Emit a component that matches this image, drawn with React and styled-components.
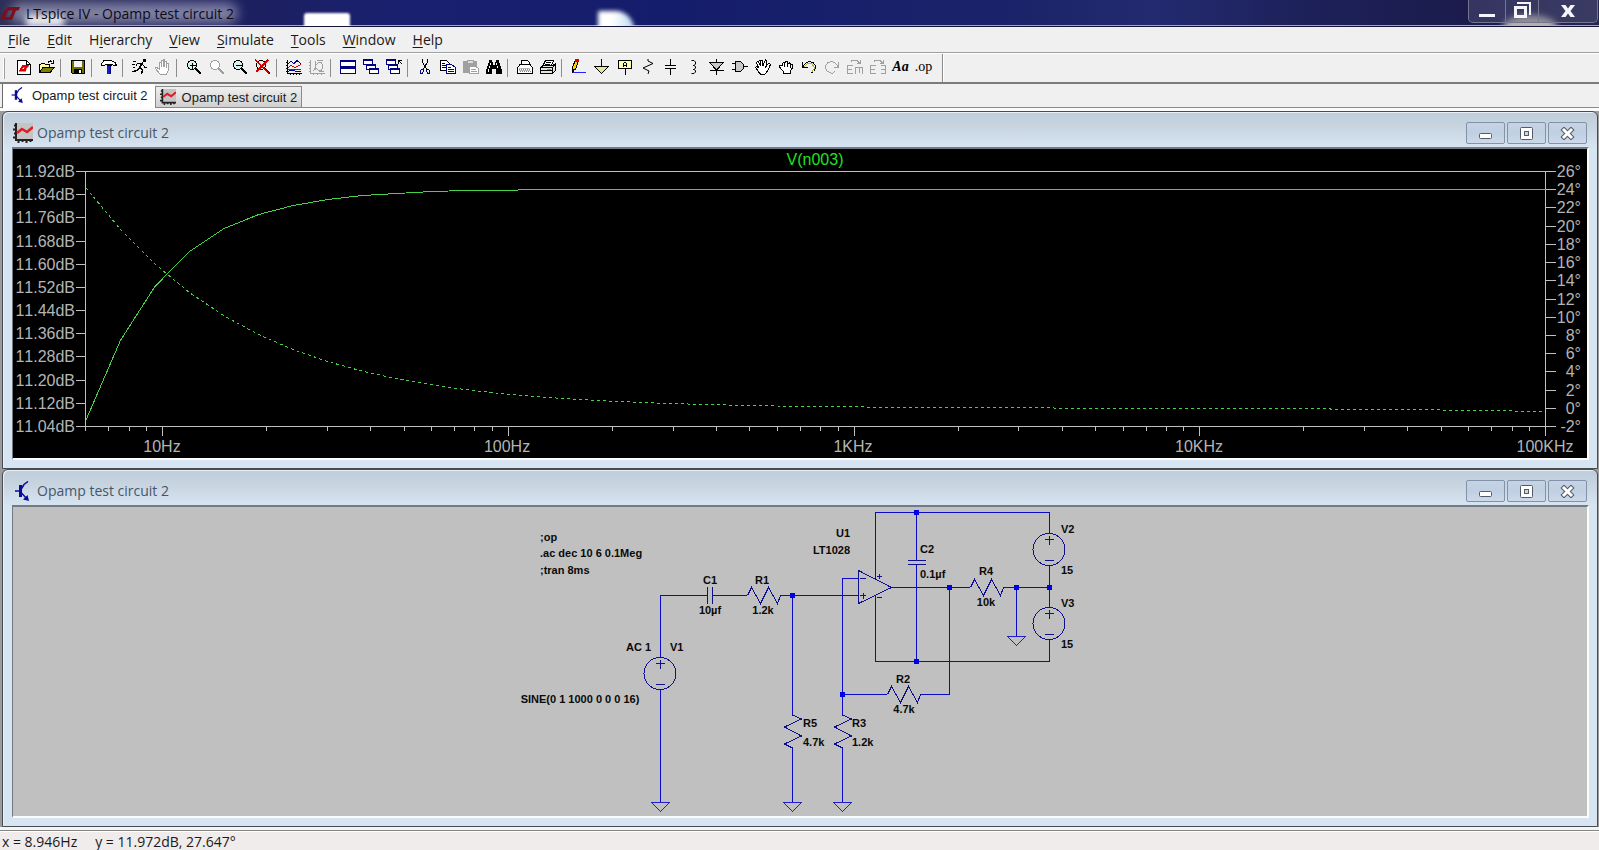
import React from "react";
import styled, { createGlobalStyle, css } from "styled-components";

const Global = createGlobalStyle`
  * { box-sizing: border-box; }
  body { margin: 0; background: #f0f0f0; font-family: "Open Sans", "Noto Sans", sans-serif; font-size: 14px; color: #1a1a1a; }
  button { font: inherit; color: inherit; margin: 0; padding: 0; border: 0; background: none; }
`;

const Page = styled.div`
  display: flex;
  flex-direction: column;
  min-height: 100vh;
`;

/* ---------- title bar ---------- */

const TitleBar = styled.header`
  position: relative;
  display: flex;
  align-items: flex-start;
  height: 27px;
  overflow: hidden;
  background: linear-gradient(90deg, #2d2e56 0, #1c1f60 16%, #1a2070 25%, #141d6b 42%, #1b2369 64%, #232a70 72%, #1d2159 82%, #1b1b4c 92%, #26264f 100%);
  border-bottom: 1px solid #15153c;
  box-shadow: inset 0 -1px 0 #a3a5bd;
`;

const Glow = styled.span`
  position: absolute;
  ${(p) => (p.$right !== undefined ? `right: ${p.$right}px;` : `left: ${p.$x}px;`)}
  top: ${(p) => p.$y}px;
  width: ${(p) => p.$w}px;
  height: ${(p) => p.$h}px;
  background: ${(p) => p.$color};
  border-radius: ${(p) => p.$radius || "3px"};
  filter: blur(${(p) => p.$blur}px);
`;

const AppTitle = styled.h1`
  position: relative;
  flex: 1;
  display: flex;
  align-items: center;
  gap: 6px;
  height: 27px;
  margin: 0;
  font-size: 14px;
  font-weight: 400;
  color: #0b0b18;
`;

const AppControls = styled.div`
  position: relative;
  display: flex;
  height: 23px;
  margin-right: 1px;
  border: 1px solid #74768f;
  border-top: 0;
  border-radius: 0 0 5px 5px;
  background: rgba(90, 92, 130, 0.4);
`;

const AppControl = styled.button`
  display: flex;
  align-items: center;
  justify-content: center;
  width: ${(p) => p.$w}px;
  & + & { border-left: 1px solid #74768f; }
`;

/* ---------- menu ---------- */

const MenuBar = styled.nav`
  display: flex;
  align-items: center;
  height: 26px;
  background: #f0f0f0;
  border-bottom: 1px solid #a0a0a0;
`;

const MenuItem = styled.button`
  padding: 0 8px;
  line-height: 20px;
  margin-right: 1px;
  u { text-underline-offset: 2px; }
`;

/* ---------- toolbar ---------- */

const ToolBar = styled.div`
  display: flex;
  align-items: center;
  height: 31px;
  padding-left: 3px;
  border-top: 1px solid #fff;
  border-bottom: 2px solid #7b7b7b;
`;

const Grip = styled.span`
  width: 2px;
  height: 21px;
  margin-right: 7px;
  background: #fff;
  border-right: 1px solid #a0a0a0;
`;

const ToolButton = styled.button`
  display: flex;
  align-items: center;
  justify-content: center;
  width: 23px;
  height: 22px;
  padding-bottom: 2px;
  svg { display: block; }
`;

const Divider = styled.span`
  width: 1px;
  height: 18px;
  margin: 0 5px 0 2px;
  background: #8c8c8c;
`;

const ToolEnd = styled.span`
  width: 2px;
  align-self: stretch;
  margin-left: 7px;
  background: #fff;
  border-left: 1px solid #8c8c8c;
`;

/* ---------- document tabs ---------- */

const TabStrip = styled.div`
  display: flex;
  align-items: flex-end;
  height: 27px;
  padding: 0 2px 3px;
  background: linear-gradient(#f0f0f0 23px, #8a8a8a 23px, #8a8a8a 24px, #fbfbfb 24px);
`;

const Tab = styled.button`
  display: flex;
  align-items: center;
  gap: 6px;
  font-family: "Liberation Sans", Arial, sans-serif;
  font-size: 13px;
  ${(p) =>
    p.$active
      ? css`
          height: 24px;
          padding: 0 7px 2px;
          border-left: 1px solid #6a6a6a;
          background: #fff;
        `
      : css`
          height: 22px;
          padding: 0 4px;
          border: 1px solid #8a8a8a;
          background: linear-gradient(#f0f0f0, #cfcfcf);
        `}
`;

/* ---------- MDI windows ---------- */

const Workspace = styled.main`
  flex: 1;
  display: flex;
  flex-direction: column;
  padding: 0 1px 0 2px;
  background: #9c9c9c;
`;

const Frame = styled.section`
  flex: ${(p) => (p.$grow ? "1 0 auto" : "0 0 auto")};
  display: flex;
  flex-direction: column;
  padding: 0 8px 8px 9px;
  border: 1px solid #474c52;
  border-radius: 6px 6px 0 0;
  background: linear-gradient(#bfcddb 0, #c6d3df 12px, #d7e4f1 36px, #d7e4f2 100%);
  box-shadow: inset 1px 1px 0 #e8eff6;
`;

const FrameBar = styled.div`
  display: flex;
  align-items: center;
  height: 35px;
`;

const FrameTitle = styled.h2`
  flex: 1;
  display: flex;
  align-items: center;
  gap: 4px;
  margin: 0;
  padding: 7px 0 0 1px;
  line-height: 20px;
  font-size: 14px;
  font-weight: 400;
  color: #465668;
`;

const FrameControls = styled.div`
  display: flex;
  gap: 2px;
  padding: 7px 2px 0 0;
`;

const FrameControl = styled.button`
  display: flex;
  align-items: center;
  justify-content: center;
  width: 39px;
  height: 22px;
  border: 1px solid #8193ab;
  border-radius: 2px;
  background: linear-gradient(#c6d3e4, #c0cfe2 50%, #cbd9ea);
`;

const Client = styled.div`
  flex: 1;
  border: 2px solid #fcfcfc;
  border-top-color: #727b84;
  border-left: 1px solid #727b84;
  background: ${(p) => p.$bg};
`;

const Drawing = styled.svg`
  display: block;
  width: 100%;
  height: auto;
`;

const AxisText = styled.text`
  font-family: "Liberation Sans", Arial, sans-serif;
  font-size: 16px;
  font-kerning: none;
  fill: ${(p) => p.$color || "#b4b4b4"};
`;

const PartText = styled.text`
  font-family: "Liberation Sans", Arial, sans-serif;
  font-size: 11px;
  font-weight: 700;
  fill: #0a0a0a;
`;

const StatusBar = styled.footer`
  display: flex;
  align-items: center;
  gap: 18px;
  height: 23px;
  padding: 6px 2px 0;
  overflow: hidden;
  background: linear-gradient(#f4f4f4 3px, #858585 3px, #858585 4px, #fff 4px, #fff 5px, #f0eceb 5px);
  line-height: 17px;
  white-space: pre;
`;

/* ---------- icons ---------- */

const Icon = ({ children, w = 16, h = 16 }) => (
  <svg width={w} height={h} viewBox={`0 0 ${w} ${h}`} fill="none" stroke="#000" strokeWidth="1" shapeRendering="crispEdges" aria-hidden="true">
    {children}
  </svg>
);

const GRAY = "#a0a0a0";
const NAVY = "#000080";

const LtLogo = () => (
  <svg width="20" height="14" viewBox="0 0 20 14" aria-hidden="true">
    <path fill="#7c0f1c" d="M0 13 L4.500 3 H8.500 L5 10 H9.500 L8.500 13Z M7 0 H20 L18.500 3.500 H16 L12 13 H8.500 L12.500 3.500 H6Z" />
  </svg>
);

const ChartIcon = ({ size = 16 }) => (
  <svg width={size} height={size} viewBox="0 0 20 20" fill="none" aria-hidden="true">
    <rect x="3" y="0" width="17" height="17" fill="#c4c4c4" />
    <path d="M3 0V17H20M1 2.500H3M0 6.500H3M1 10.500H3M0 14.500H3M5.500 17v3M9.500 17v2M13.500 17v3M17.500 17v2" stroke="#222" strokeWidth="2" />
    <path d="M4 10 L9 6 L14 9 L20 4" stroke="#e01b24" strokeWidth="2.500" />
  </svg>
);

const TransistorIcon = ({ size = 16 }) => (
  <svg width={size} height={size} viewBox="0 0 20 20" fill="none" stroke="#0a0a9a" aria-hidden="true">
    <path d="M2 10H7" strokeWidth="1.500" />
    <path d="M7.500 4V16" strokeWidth="3" />
    <path d="M8 8.500L11 3.500L15 0.500M8 11.500L14 18" strokeWidth="1.500" />
    <path d="M16 20L10 18.500L14.500 14Z" fill="#0a0a9a" stroke="none" />
  </svg>
);

const Lens = ({ color = "#000", fill = "#d8f2f0", children }) => (
  <Icon>
    <circle cx="6" cy="6" r="4.500" stroke={color} fill={fill} />
    <path d="M9.500 9.500L15 15" stroke={color} strokeWidth="2" />
    {children}
  </Icon>
);

const ToolIcons = {
  newSchematic: (
    <Icon>
      <path d="M1.500 1.500h9l4 4v10h-13z" fill="#fff" />
      <path d="M10.500 1.500v4h4" />
      <path d="M3 12L5 7.500H7L6 10H8L7.500 12ZM6.500 6H13L12 8H11L9.500 12H7.500L9 8H6Z" fill="#e00000" stroke="#e00000" strokeWidth=".5" />
    </Icon>
  ),
  open: (
    <Icon>
      <path d="M.5 13.500V5.500h1l1-1h3l1 1h4v3" fill="#ffff9c" />
      <path d="M.5 13.500L4 8.500H15.500L11 13.500Z" fill="#808000" />
      <path d="M9 3.500c1-2 3-2 4-.5M14.500 1v3h-3" />
    </Icon>
  ),
  save: (
    <Icon>
      <path d="M1.500 1.500h13v13h-12l-1-1z" fill="#6f7000" />
      <path d="M4 2h8v6H4z" fill="#f4f4f4" stroke="none" />
      <path d="M4 10h8v4H4z" fill="#000" stroke="none" />
      <path d="M9 11h2v3H9z" fill="#fff" stroke="none" />
    </Icon>
  ),
  hammer: (
    <Icon>
      <path d="M.5 4.500L3 1.500H10L14 3.500L15.500 6.500H13L11 5.500H5L3 6.500H1Z" fill="#fff" />
      <path d="M5.500 6.500h5" />
      <path d="M8 7v8" stroke="#0a1fc8" strokeWidth="4" />
      <path d="M9.500 7v8" stroke={NAVY} />
    </Icon>
  ),
  run: (
    <Icon>
      <path d="M11 0h3v3h-3z" fill="#000" stroke="none" />
      <path d="M10.500 3.500L7.500 8.500L10.500 11L9.500 15M7.500 8.500L5.500 11.500L.5 12.500" strokeWidth="1.500" />
      <path d="M10.500 5l2 3h2.500M9.500 4L5.500 4.500L4 7M1 2h3M0 5h3M1 8h2" />
    </Icon>
  ),
  halt: (
    <Icon>
      <path d="M4.500 14.500L.5 9.500V8.500H2L4.500 10.500V3.500H6V8V1.500H8V8V.5H9.500V8V2.500H11.500V8.500V4.500H13.500V11L11.500 15.500H5.500Z" stroke={GRAY} fill="#fff" />
    </Icon>
  ),
  zoomIn: (
    <Lens>
      <path d="M3.500 6.500h6M6.500 3.500v6" />
    </Lens>
  ),
  zoomArea: <Lens color={GRAY} fill="#fff" />,
  zoomOut: (
    <Lens>
      <path d="M3.500 6.500h6" />
    </Lens>
  ),
  zoomFit: (
    <Lens>
      <path d="M0 1L14 14M13 1L1 13" stroke="#d40000" strokeWidth="1.500" />
    </Lens>
  ),
  autorange: (
    <Icon>
      <path d="M1.500 1v13.500H16M0 3.500h1M0 6.500h1M0 9.500h1M0 12.500h1M4.500 15v1M7.500 15v1M10.500 15v1M13.500 15v1" />
      <path d="M2 4.500L5 2.500L8 4.500L11 1.500L15 4.500" stroke={NAVY} />
      <path d="M2 8.500L5 6.500L9 8.500L15 5.500" stroke="#d40000" />
      <path d="M2 10.500h13" stroke="#d40000" />
      <path d="M2 12.500L6 11L10 12.500H15" stroke={NAVY} />
    </Icon>
  ),
  plotPane: (
    <Icon>
      <g stroke={GRAY}>
        <path d="M1.500 1v13.500H16M0 3.500h1M0 6.500h1M0 9.500h1M0 12.500h1M4.500 15v1M8.500 15v1M12.500 15v1" />
        <path d="M6.500 2v9M8 1.500h6M6.500 6.500L9.500 3.500H12.500L13.500 6V9L12.500 11.500H9.500L6.500 9M15 12h-5M4 12L6.500 9" />
      </g>
    </Icon>
  ),
  tile: (
    <Icon>
      <path d="M.5 1.500h15v6h-15zM.5 8.500h15v6h-15z" stroke={NAVY} fill="#fff" />
      <path d="M0 2h16M0 9h16" stroke={NAVY} strokeWidth="2" />
    </Icon>
  ),
  cascade: (
    <Icon>
      <g stroke={NAVY} fill="#fff">
        <path d="M.5 .5h9v5h-9z" />
        <path d="M0 1h10" strokeWidth="2" />
        <path d="M3.500 5.500h9v5h-9z" />
        <path d="M3 6h10" strokeWidth="2" />
        <path d="M6.500 9.500h9v5h-9z" />
        <path d="M6 10h10" strokeWidth="2" />
      </g>
    </Icon>
  ),
  closeAll: (
    <Icon>
      <g stroke={NAVY} fill="#fff">
        <path d="M.5 .5h9v5h-9z" />
        <path d="M0 1h10" strokeWidth="2" />
        <path d="M2.500 5.500h9v5h-9z" />
        <path d="M2 6h10" strokeWidth="2" />
        <path d="M4.500 9.500h9v5h-9z" />
        <path d="M4 10h10" strokeWidth="2" />
      </g>
      <path d="M12.500 5V1.500H16M12.500 1.500L16 5" />
    </Icon>
  ),
  cut: (
    <Icon>
      <path d="M5.500 0v3l4 7M10.500 0v3l-4 7" />
      <path d="M6.500 10h-2l-1 2v2h2l1-2zM9.500 10h2l1 2v2h-2l-1-2z" stroke={NAVY} />
    </Icon>
  ),
  copy: (
    <Icon>
      <path d="M.5 1.500h6l3 3v7h-9z" fill="#fff" />
      <path d="M2 4.500h3M2 6.500h4M2 8.500h4" />
      <path d="M6.500 5.500h5l4 3v6h-9z" fill="#fff" stroke={NAVY} />
      <path d="M8 8.500h3M8 10.500h6M8 12.500h6" stroke={NAVY} />
    </Icon>
  ),
  paste: (
    <Icon>
      <path d="M.5 2.500h13v11H.5z" fill={GRAY} stroke={GRAY} />
      <path d="M4 1h6v3H4z" fill="#ddd" stroke={GRAY} />
      <path d="M6.500 7.500h6l3 2v5h-9z" fill="#fff" stroke={GRAY} />
      <path d="M8 10.500h5M8 12.500h6" stroke={GRAY} />
    </Icon>
  ),
  find: (
    <Icon>
      <path d="M3 1h3v2h1v3h2V3h1V1h3v2l3 8v4h-6v-5H6v5H0v-4l3-8z" fill="#000" stroke="none" />
      <path d="M4.500 4v2M3.500 7v2M2.500 10v3M10.500 4v2M11.500 7v2" stroke="#fff" />
    </Icon>
  ),
  printSetup: (
    <Icon>
      <path d="M4.500 6V1.500h6l2 2V6" fill="#fff" />
      <path d="M.5 8.500L3 5.500H13L15.500 8.500V14.500H.5Z" fill="#fff" />
      <path d="M2 10.500h11M3 12.500h11" stroke="#888" strokeDasharray="1 1" />
      <path d="M2 9.500h11M2 11.500h11" stroke="#bbb" />
    </Icon>
  ),
  print: (
    <Icon>
      <path d="M3 6.500L5.500 1.500H13.500L11.500 6.500" fill="#fff" />
      <path d="M6 3.500h5M5 5.500h5" />
      <path d="M.5 8.500L3 6.500H13L15.500 4.500V11.500L12.500 14.500H.5Z" fill="#e4e4dc" />
      <path d="M.5 8.500h12v6M12.500 8.500L15.500 5M1 11.500h11" />
      <path d="M7 10.500h4" stroke="#a0a000" />
    </Icon>
  ),
  wire: (
    <Icon>
      <path d="M4.500 .5L7.500 2L4.500 10L1.500 12.500V8.500Z" fill="#ffd000" />
      <path d="M4 0h4v3H4z" fill="#d40000" stroke="none" />
      <path d="M1 10h2v4H1z" fill="#000" stroke="none" />
      <path d="M2 13.500h13" stroke="#2222ff" />
    </Icon>
  ),
  ground: (
    <Icon>
      <path d="M7.500 0v7" />
      <path d="M.5 7.500h14L7.500 14.500Z" fill="#e6e69a" />
    </Icon>
  ),
  label: (
    <Icon>
      <path d="M1.500 1.500h13v8h-13z" fill="#ffffb4" />
      <path d="M8 10v6" />
      <path d="M6.500 8V4.500L7.500 3.500h1L9.500 4.500V8M6.500 6.500h3" />
    </Icon>
  ),
  resistor: (
    <Icon>
      <path d="M8 0v2L13 4.500L3 9L9 12L8 15" shapeRendering="auto" />
    </Icon>
  ),
  capacitor: (
    <Icon>
      <path d="M7.500 0v6M2 6.500h11M2 9.500h11M7.500 10v6" />
    </Icon>
  ),
  inductor: (
    <Icon>
      <path d="M5.500 1.500H8L9.500 3V5L8 6.500H7M8 6.500L9.500 7.500V9L8 10.500H7M8 10.500L9.500 11.500V13L8 14.500H5.500" shapeRendering="auto" />
    </Icon>
  ),
  diode: (
    <Icon>
      <path d="M7.500 0v16M1 11.500h14" />
      <path d="M.5 3.500h14L7.500 11Z" fill="#c8c8c8" />
    </Icon>
  ),
  gate: (
    <Icon>
      <path d="M3.500 2.500h5l3 3v4l-3 3h-5z" fill="#c8c8c8" />
      <path d="M0 4.500h3M0 10.500h3M12 7.500h4" />
    </Icon>
  ),
  move: (
    <Icon>
      <path d="M4 13.500L.5 8.500L1.500 7.500L3.500 8.500L1.500 3.500L3 2.500L5.500 7L5 1.500H7L8 6.500L10.500 .5L12 1.500L11 7.500L14 4L15.500 5.500L12.500 12L9.500 15.500H6Z" fill="#fff" />
    </Icon>
  ),
  drag: (
    <Icon>
      <path d="M4.500 11.500L1.500 8L2 6.500H4V4.500L5.500 3.500L6.500 4.500L7.500 2.500H9L10 4.500L11.500 3.500L12.500 5.500H14V9.500L12.500 12V14.500H5.500V12.500Z" fill="#fff" />
      <path d="M6.500 5v3M9.500 5v3M12.500 6v3" />
    </Icon>
  ),
  undo: (
    <Icon>
      <path d="M1.500 3v5h5M2 7.500L4.500 4.500L8 2.500L12 3.500L14.500 7V9.500L12.500 12.500L10 14" />
      <path d="M3 8L5.500 5.500L8 4L11 5L13 8V10L11 12.500" stroke="#b0b040" />
    </Icon>
  ),
  redo: (
    <Icon>
      <path d="M14.500 3v5h-5M14 7.500L11.500 4.500L8 2.500L4 3.500L1.500 7V9.500L3.500 12.500L7 14H9L11 12" stroke={GRAY} />
    </Icon>
  ),
  rotate: (
    <Icon>
      <path d="M3.500 3.500L5 1.500H10L12.500 4M13.500 1v3.500h-4M6 6.500H.5V14.500H6M1 10.500h4M8.500 15V8.500H15.500V15M12 8v6" stroke={GRAY} />
    </Icon>
  ),
  mirror: (
    <Icon>
      <path d="M3.500 3.500L5 1.500H10L12.500 4M13.500 1v3.500h-4M6 6.500H.5V14.500H6M1 10.500h4M10.500 6.500H15.500V14.500H10.500M15 10.500h-4" stroke={GRAY} />
    </Icon>
  ),
};

const GlyphText = styled.span`
  font-family: "Liberation Serif", "Times New Roman", serif;
  font-size: 14px;
  font-weight: ${(p) => (p.$italic ? 700 : 400)};
  font-style: ${(p) => (p.$italic ? "italic" : "normal")};
  line-height: 16px;
  color: #000;
`;

const TOOL_GROUPS = [
  [["New schematic", ToolIcons.newSchematic], ["Open", ToolIcons.open]],
  [["Save", ToolIcons.save]],
  [["Control panel", ToolIcons.hammer]],
  [["Run", ToolIcons.run], ["Halt", ToolIcons.halt]],
  [["Zoom in", ToolIcons.zoomIn], ["Zoom area", ToolIcons.zoomArea], ["Zoom out", ToolIcons.zoomOut], ["Zoom full extents", ToolIcons.zoomFit]],
  [["Autorange", ToolIcons.autorange], ["Plot pane", ToolIcons.plotPane]],
  [["Tile windows", ToolIcons.tile], ["Cascade windows", ToolIcons.cascade], ["Close all windows", ToolIcons.closeAll]],
  [["Cut", ToolIcons.cut], ["Copy", ToolIcons.copy], ["Paste", ToolIcons.paste], ["Find", ToolIcons.find]],
  [["Print setup", ToolIcons.printSetup], ["Print", ToolIcons.print]],
  [
    ["Wire", ToolIcons.wire],
    ["Ground", ToolIcons.ground],
    ["Label net", ToolIcons.label],
    ["Resistor", ToolIcons.resistor],
    ["Capacitor", ToolIcons.capacitor],
    ["Inductor", ToolIcons.inductor],
    ["Diode", ToolIcons.diode],
    ["Component", ToolIcons.gate],
    ["Move", ToolIcons.move],
    ["Drag", ToolIcons.drag],
    ["Undo", ToolIcons.undo],
    ["Redo", ToolIcons.redo],
    ["Rotate", ToolIcons.rotate],
    ["Mirror", ToolIcons.mirror],
    ["Text", <GlyphText $italic>Aa</GlyphText>],
    ["SPICE directive", <GlyphText>.op</GlyphText>],
  ],
];

const MENUS = [
  ["", "F", "ile"],
  ["", "E", "dit"],
  ["H", "i", "erarchy"],
  ["", "V", "iew"],
  ["", "S", "imulate"],
  ["", "T", "ools"],
  ["", "W", "indow"],
  ["", "H", "elp"],
];

/* ---------- Bode plot ---------- */

const PLOT = { left: 72.5, right: 1532.5, top: 22.5, bottom: 277.5 };
const DECADE = 345.75;
const xOf = (f) => PLOT.right + DECADE * Math.log10(f / 1e5);
const yOfDb = (db) => PLOT.bottom - ((db - 11.04) / 0.88) * (PLOT.bottom - PLOT.top);
const yOfDeg = (deg) => PLOT.bottom - ((deg + 2) / 28) * (PLOT.bottom - PLOT.top);

const CORNER = 2.698;
const sweep = [];
for (let k = 0; k <= 42; k++) sweep.push(6 * Math.pow(10, k / 10));
sweep.push(1e5);

const trace = (fn) => sweep.map((f) => `${xOf(f).toFixed(1)},${fn(f).toFixed(1)}`).join(" ");
const magnitude = trace((f) => Math.floor(yOfDb(11.859 - 10 * Math.log10(1 + (CORNER / f) ** 2))) + 0.5);
const phase = trace((f) =>
  yOfDeg(((Math.atan(CORNER / f) - Math.atan(f / 15.3e6)) * 180) / Math.PI)
);

const dbTicks = Array.from({ length: 12 }, (_, i) => 11.92 - i * 0.08);
const degTicks = Array.from({ length: 15 }, (_, i) => 26 - i * 2);
const decades = [[10, "10Hz"], [100, "100Hz"], [1000, "1KHz"], [10000, "10KHz"], [100000, "100KHz"]];
const minorTicks = [6, 7, 8, 9];
[10, 100, 1000, 10000].forEach((d) => {
  for (let m = 2; m < 10; m++) minorTicks.push(m * d);
});
const snap = (v) => Math.floor(v + 0.01) + 0.5;

const BodePlot = () => (
  <Drawing viewBox="0 0 1574 309" role="img" aria-label="V(n003) magnitude and phase">
    <g stroke="#c0c0c0" fill="none" shapeRendering="crispEdges">
      <rect x={PLOT.left} y={PLOT.top} width={PLOT.right - PLOT.left} height={PLOT.bottom - PLOT.top} />
      {dbTicks.map((v) => (
        <path key={v} d={`M63 ${snap(yOfDb(v))}H${PLOT.left}`} />
      ))}
      {degTicks.map((v) => (
        <path key={v} d={`M${PLOT.right} ${snap(yOfDeg(v))}h10`} />
      ))}
      {minorTicks.map((f) => (
        <path key={f} d={`M${snap(xOf(f))} ${PLOT.bottom}v4`} />
      ))}
      {decades.map(([f]) => (
        <path key={f} d={`M${snap(xOf(f))} ${PLOT.bottom}v9`} />
      ))}
    </g>
    {dbTicks.map((v) => (
      <AxisText key={v} x="62" y={Math.floor(yOfDb(v) + 0.01) + 6} textAnchor="end">{`${v.toFixed(2)}dB`}</AxisText>
    ))}
    {degTicks.map((v) => (
      <AxisText key={v} x="1568" y={Math.floor(yOfDeg(v) + 0.01) + 6} textAnchor="end">{`${v}°`}</AxisText>
    ))}
    {decades.map(([f, name]) => (
      <AxisText key={f} x={Math.round(xOf(f)) - 1} y="303" textAnchor="middle">{name}</AxisText>
    ))}
    <AxisText x="802" y="16" textAnchor="middle" $color="#22e022">V(n003)</AxisText>
    <g stroke="#46d246" fill="none" shapeRendering="crispEdges">
      <polyline points={magnitude} />
      <polyline points={phase} strokeDasharray="3 3" />
    </g>
  </Drawing>
);

/* ---------- schematic ---------- */

const Node = ({ x, y }) => <rect x={x - 2.5} y={y - 2.5} width="5" height="5" fill="#0000e6" stroke="none" />;
const Ground = ({ x, y }) => <path d={`M${x - 9} ${y}h18l-9 9z`} stroke="#2020d0" />;
const ResistorH = ({ x, y }) => <path d={`M${x} ${y}l4 -8l9 16l8 -16l9 16l3 -8`} stroke="#10108c" />;
const ResistorV = ({ x, y }) => <path d={`M${x} ${y}l9 4l-17 8l17 9l-17 8l8 4`} stroke="#10108c" />;
const Source = ({ x, y }) => (
  <g stroke="#10108c">
    <circle cx={x} cy={y} r="16" />
    <path d={`M${x - 4} ${y - 10}h9M${x + 0.5} ${y - 14}v9M${x - 4} ${y + 11}h9`} />
  </g>
);

const PART_LABELS = [
  [540, 541, ";op"],
  [540, 557, ".ac dec 10 6 0.1Meg"],
  [540, 574, ";tran 8ms"],
  [850, 537, "U1", "end"],
  [850, 554, "LT1028", "end"],
  [710, 584, "C1", "middle"],
  [710, 614, "10µf", "middle"],
  [762, 584, "R1", "middle"],
  [763, 614, "1.2k", "middle"],
  [626, 651, "AC 1"],
  [670, 651, "V1"],
  [580, 703, "SINE(0 1 1000 0 0 0 16)", "middle"],
  [920, 553, "C2"],
  [920, 578, "0.1µf"],
  [986, 575, "R4", "middle"],
  [986, 606, "10k", "middle"],
  [1061, 533, "V2"],
  [1061, 574, "15"],
  [1061, 607, "V3"],
  [1061, 648, "15"],
  [903, 683, "R2", "middle"],
  [904, 713, "4.7k", "middle"],
  [803, 727, "R5"],
  [803, 746, "4.7k"],
  [852, 727, "R3"],
  [852, 746, "1.2k"],
];

const WIRES = [
  "M660.5 657V595.5H707M713 595.5H747M780 595.5H858",
  "M660.5 690V802",
  "M792.5 595V715M792.5 748V802",
  "M858 578.5H842.5V715M842.5 748V802",
  "M842 694.5H887M920 694.5H949.5V587.5",
  "M875.5 579V512.5H1049.5V533",
  "M875.5 595V661.5H1049.5V640",
  "M916.5 512V560M916.5 565V661",
  "M892 587.5H970M1003 587.5H1049",
  "M1016.5 587V636",
  "M1049.5 565V607",
];

const Schematic = () => (
  <Drawing viewBox="13 507 1574 309" role="img" aria-label="Opamp test circuit schematic">
    <g fill="none" stroke="#0a0ac8" shapeRendering="crispEdges">
      {WIRES.map((d) => (
        <path key={d} d={d} />
      ))}
      <g stroke="#10108c">
        <path d="M707.5 587v17M712.5 587v17M908 560.5h18M908 564.5h18" />
        <path d="M858.5 570.5V603.5L891.5 587.5Z" />
        <path d="M860 578.5h6M860 595.5h6M863.5 593v6M877 576.5h5M879.5 574v5M877 597.5h5" />
      </g>
      <ResistorH x={747.5} y={595.5} />
      <ResistorH x={887.5} y={694.5} />
      <ResistorH x={970.5} y={587.5} />
      <ResistorV x={792.5} y={715} />
      <ResistorV x={842.5} y={715} />
      <Source x={660} y={673.5} />
      <Source x={1049} y={549.5} />
      <Source x={1049} y={623.5} />
      <Ground x={660.5} y={802.5} />
      <Ground x={792.5} y={802.5} />
      <Ground x={842.5} y={802.5} />
      <Ground x={1016.5} y={636.5} />
      <Node x={792.5} y={595.5} />
      <Node x={842.5} y={694.5} />
      <Node x={916.5} y={512.5} />
      <Node x={916.5} y={661.5} />
      <Node x={949.5} y={587.5} />
      <Node x={1016.5} y={587.5} />
      <Node x={1049.5} y={587.5} />
    </g>
    {PART_LABELS.map(([x, y, text, anchor]) => (
      <PartText key={`${x}-${y}`} x={x} y={y} textAnchor={anchor || "start"}>{text}</PartText>
    ))}
  </Drawing>
);

/* ---------- window ---------- */

const MdiWindow = ({ icon, title, bg, grow, children }) => (
  <Frame $grow={grow}>
    <FrameBar>
      <FrameTitle>{icon}{title}</FrameTitle>
      <FrameControls>
        <FrameControl aria-label="Minimize">
          <svg width="15" height="15" viewBox="0 0 15 15" aria-hidden="true">
            <rect x="1.500" y="7.500" width="12" height="5" rx="1" fill="#fff" stroke="#545a66" />
          </svg>
        </FrameControl>
        <FrameControl aria-label="Maximize">
          <svg width="13" height="13" viewBox="0 0 13 13" aria-hidden="true">
            <rect x=".5" y=".5" width="12" height="12" rx="1" fill="#fff" stroke="#545a66" />
            <rect x="4.500" y="4.500" width="4" height="4" fill="#c9d5e4" stroke="#545a66" />
          </svg>
        </FrameControl>
        <FrameControl aria-label="Close">
          <svg width="15" height="13" viewBox="0 0 15 13" aria-hidden="true">
            <path d="M4 3L11 10M11 3L4 10" stroke="#545a66" strokeWidth="5" strokeLinecap="square" />
            <path d="M4 3L11 10M11 3L4 10" stroke="#fff" strokeWidth="3" strokeLinecap="square" />
          </svg>
        </FrameControl>
      </FrameControls>
    </FrameBar>
    <Client $bg={bg}>{children}</Client>
  </Frame>
);

export default function App() {
  return (
    <Page>
      <Global />
      <TitleBar>
        <Glow $x={10} $y={3} $w={228} $h={20} $blur={6} $color="rgba(160,162,190,0.75)" $radius="10px" />
        <Glow $x={26} $y={15} $w={38} $h={12} $blur={3} $color="rgba(255,255,255,0.85)" />
        <Glow $x={304} $y={13} $w={46} $h={16} $blur={1} $color="#fff" />
        <Glow $x={598} $y={11} $w={36} $h={20} $blur={2} $color="linear-gradient(100deg, #fff 40%, #b8d8f0)" $radius="2px 24px 2px 2px" />
        <Glow $right={42} $y={15} $w={54} $h={24} $blur={3} $color="#b9b0ac" $radius="50%" />
        <AppTitle><LtLogo />LTspice IV - Opamp test circuit 2</AppTitle>
        <AppControls>
          <AppControl $w={36} aria-label="Minimize">
            <svg width="16" height="16" viewBox="0 0 16 16" aria-hidden="true"><rect y="11" width="16" height="3" fill="#f4f4fa" /></svg>
          </AppControl>
          <AppControl $w={33} aria-label="Restore">
            <svg width="17" height="18" viewBox="0 0 17 18" fill="none" aria-hidden="true">
              <path d="M3 1H16V13" stroke="#f4f4fa" strokeWidth="2" />
              <rect x="1.500" y="5.500" width="10" height="9" stroke="#f4f4fa" strokeWidth="3" />
            </svg>
          </AppControl>
          <AppControl $w={59} aria-label="Close">
            <svg width="14" height="12" viewBox="0 0 14 12" aria-hidden="true">
              <path d="M0 0H4.500L7 3.500L9.500 0H14L9.500 6L14 12H9.500L7 8.500L4.500 12H0L4.500 6Z" fill="#f4f4fa" />
            </svg>
          </AppControl>
        </AppControls>
      </TitleBar>

      <MenuBar>
        {MENUS.map(([pre, key, post]) => (
          <MenuItem key={pre + key + post}>{pre}<u>{key}</u>{post}</MenuItem>
        ))}
      </MenuBar>

      <ToolBar role="toolbar">
        <Grip />
        {TOOL_GROUPS.map((group, i) => (
          <React.Fragment key={i}>
            {i > 0 && <Divider />}
            {group.map(([name, icon]) => (
              <ToolButton key={name} aria-label={name}>{icon}</ToolButton>
            ))}
          </React.Fragment>
        ))}
        <ToolEnd />
      </ToolBar>

      <TabStrip role="tablist">
        <Tab $active role="tab" aria-selected="true"><TransistorIcon />Opamp test circuit 2</Tab>
        <Tab role="tab" aria-selected="false"><ChartIcon />Opamp test circuit 2</Tab>
      </TabStrip>

      <Workspace>
        <MdiWindow icon={<ChartIcon size={20} />} title="Opamp test circuit 2" bg="#000">
          <BodePlot />
        </MdiWindow>
        <MdiWindow icon={<TransistorIcon size={20} />} title="Opamp test circuit 2" bg="#c0c0c0" grow>
          <Schematic />
        </MdiWindow>
      </Workspace>

      <StatusBar>
        <span>x = 8.946Hz</span>
        <span>y = 11.972dB, 27.647°</span>
      </StatusBar>
    </Page>
  );
}
